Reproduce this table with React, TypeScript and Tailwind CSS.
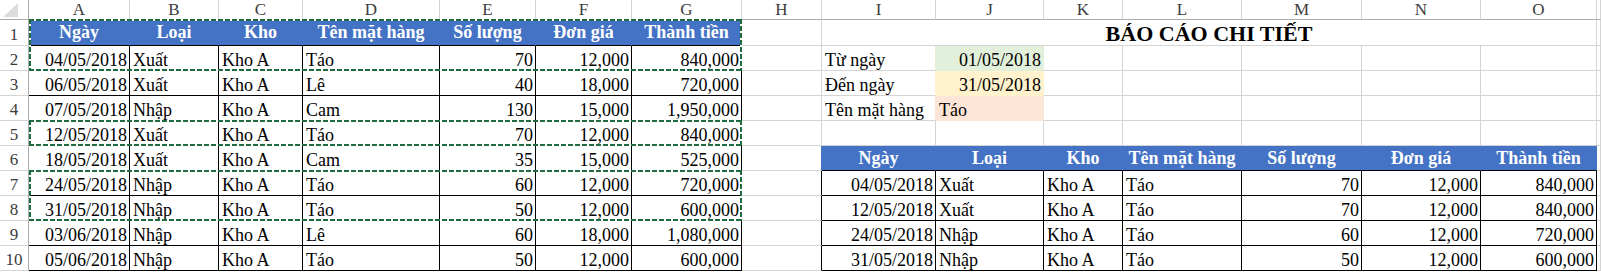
import React from 'react';

type BC = 'grid' | 'black' | 'blue' | 'green' | 'yellow' | 'peach' | 'hdr';
type Fill = 'white' | 'blue' | 'green' | 'yellow' | 'peach';
type Align = 'l' | 'r' | 'c';

const RIGHT: Record<BC, string> = {
  grid: 'border-r-[#d4d4d4]',
  black: 'border-r-black',
  blue: 'border-r-[#4472c4]',
  green: 'border-r-[#e2efda]',
  yellow: 'border-r-[#fff2cc]',
  peach: 'border-r-[#fce4d6]',
  hdr: 'border-r-[#ababab]',
};
const BOTTOM: Record<BC, string> = {
  grid: 'border-b-[#d4d4d4]',
  black: 'border-b-black',
  blue: 'border-b-[#4472c4]',
  green: 'border-b-[#e2efda]',
  yellow: 'border-b-[#fff2cc]',
  peach: 'border-b-[#fce4d6]',
  hdr: 'border-b-[#ababab]',
};
const BG: Record<Fill, string> = {
  white: 'bg-white',
  blue: 'bg-[#4472c4]',
  green: 'bg-[#e2efda]',
  yellow: 'bg-[#fff2cc]',
  peach: 'bg-[#fce4d6]',
};
const ALIGN: Record<Align, string> = {
  l: 'justify-start pl-[3px]',
  r: 'justify-end pr-[2px]',
  c: 'justify-center',
};

type Cell = {
  key: string;
  text?: string;
  align?: Align;
  fill?: Fill;
  right: BC;
  bottom: BC;
  kind: 'body' | 'head' | 'axis' | 'corner' | 'title' | 'colhead';
  span7?: boolean;
};

const letters = ['A', 'B', 'C', 'D', 'E', 'F', 'G', 'H', 'I', 'J', 'K', 'L', 'M', 'N', 'O'];
const headers = ['Ngày', 'Loại', 'Kho', 'Tên mặt hàng', 'Số lượng', 'Đơn giá', 'Thành tiền'];
const dataAligns: Align[] = ['r', 'l', 'l', 'l', 'r', 'r', 'r'];

const table1: string[][] = [
  ['04/05/2018', 'Xuất', 'Kho A', 'Táo', '70', '12,000', '840,000'],
  ['06/05/2018', 'Xuất', 'Kho A', 'Lê', '40', '18,000', '720,000'],
  ['07/05/2018', 'Nhập', 'Kho A', 'Cam', '130', '15,000', '1,950,000'],
  ['12/05/2018', 'Xuất', 'Kho A', 'Táo', '70', '12,000', '840,000'],
  ['18/05/2018', 'Xuất', 'Kho A', 'Cam', '35', '15,000', '525,000'],
  ['24/05/2018', 'Nhập', 'Kho A', 'Táo', '60', '12,000', '720,000'],
  ['31/05/2018', 'Nhập', 'Kho A', 'Táo', '50', '12,000', '600,000'],
  ['03/06/2018', 'Nhập', 'Kho A', 'Lê', '60', '18,000', '1,080,000'],
  ['05/06/2018', 'Nhập', 'Kho A', 'Táo', '50', '12,000', '600,000'],
];

const report: string[][] = [
  ['04/05/2018', 'Xuất', 'Kho A', 'Táo', '70', '12,000', '840,000'],
  ['12/05/2018', 'Xuất', 'Kho A', 'Táo', '70', '12,000', '840,000'],
  ['24/05/2018', 'Nhập', 'Kho A', 'Táo', '60', '12,000', '720,000'],
  ['31/05/2018', 'Nhập', 'Kho A', 'Táo', '50', '12,000', '600,000'],
];

const params: { label: string; value: string; align: Align; fill: Fill; bc: BC }[] = [
  { label: 'Từ ngày', value: '01/05/2018', align: 'r', fill: 'green', bc: 'green' },
  { label: 'Đến ngày', value: '31/05/2018', align: 'r', fill: 'yellow', bc: 'yellow' },
  { label: 'Tên mặt hàng', value: 'Táo', align: 'l', fill: 'peach', bc: 'peach' },
];

function buildCells(): Cell[] {
  const cells: Cell[] = [];
  cells.push({ key: 'corner', kind: 'corner', right: 'hdr', bottom: 'hdr' });
  letters.forEach((l) =>
    cells.push({ key: 'h' + l, kind: 'colhead', text: l, align: 'c', right: 'grid', bottom: 'hdr' })
  );
  cells.push({ key: 'hP', kind: 'colhead', right: 'grid', bottom: 'hdr' });

  for (let r = 1; r <= 10; r++) {
    cells.push({ key: `n${r}`, kind: 'axis', text: String(r), align: 'c', right: 'hdr', bottom: 'grid' });
    for (let c = 0; c < 7; c++) {
      if (r === 1) {
        cells.push({
          key: `a${r}-${c}`,
          kind: 'head',
          text: headers[c],
          align: 'c',
          fill: 'blue',
          right: c === 6 ? 'black' : 'blue',
          bottom: 'black',
        });
      } else {
        cells.push({
          key: `a${r}-${c}`,
          kind: 'body',
          text: table1[r - 2][c],
          align: dataAligns[c],
          right: 'black',
          bottom: 'black',
        });
      }
    }
    cells.push({
      key: `H${r}`,
      kind: 'body',
      right: r === 6 ? 'blue' : r >= 7 ? 'black' : 'grid',
      bottom: 'grid',
    });
    if (r === 1) {
      cells.push({
        key: 'title',
        kind: 'title',
        text: 'BÁO CÁO CHI TIẾT',
        align: 'c',
        right: 'grid',
        bottom: 'grid',
        span7: true,
      });
    } else if (r >= 2 && r <= 4) {
      const p = params[r - 2];
      cells.push({ key: `I${r}`, kind: 'body', text: p.label, align: 'l', right: p.bc, bottom: 'grid' });
      cells.push({ key: `J${r}`, kind: 'body', text: p.value, align: p.align, fill: p.fill, right: p.bc, bottom: p.bc });
      for (let c = 2; c < 7; c++) cells.push({ key: `b${r}-${c}`, kind: 'body', right: 'grid', bottom: 'grid' });
    } else if (r === 5) {
      for (let c = 0; c < 7; c++) cells.push({ key: `b${r}-${c}`, kind: 'body', right: 'grid', bottom: 'grid' });
    } else if (r === 6) {
      for (let c = 0; c < 7; c++)
        cells.push({
          key: `b${r}-${c}`,
          kind: 'head',
          text: headers[c],
          align: 'c',
          fill: 'blue',
          right: 'blue',
          bottom: 'black',
        });
    } else {
      for (let c = 0; c < 7; c++)
        cells.push({
          key: `b${r}-${c}`,
          kind: 'body',
          text: report[r - 7][c],
          align: dataAligns[c],
          right: 'black',
          bottom: 'black',
        });
    }
    cells.push({ key: `P${r}`, kind: 'body', right: 'grid', bottom: 'grid' });
  }
  return cells;
}

const KIND: Record<Cell['kind'], string> = {
  body: 'items-end text-[18px] leading-[20px] text-black',
  head: 'items-center text-[18px] font-bold text-white',
  axis: 'items-end text-[17px] leading-[20px] text-[#3c3c3c]',
  colhead: 'items-center text-[17px] text-[#3c3c3c]',
  corner: 'items-end justify-end',
  title: 'items-end text-[22px] leading-[22px] font-bold text-black',
};

function Marquee({ pos }: { pos: string }) {
  const h = 'bg-[repeating-linear-gradient(90deg,#1d6b3e_0px_5px,#ffffff_5px_7px)]';
  const v = 'bg-[repeating-linear-gradient(180deg,#1d6b3e_0px_5px,#ffffff_5px_7px)]';
  return (
    <div className={`pointer-events-none absolute ${pos}`}>
      <div className={`absolute left-0 right-0 top-0 h-[2px] ${h}`} />
      <div className={`absolute left-0 right-0 bottom-0 h-[2px] ${h}`} />
      <div className={`absolute top-0 bottom-0 left-0 w-[2px] ${v}`} />
      <div className={`absolute top-0 bottom-0 right-0 w-[2px] ${v}`} />
    </div>
  );
}

export default function App() {
  const cells = buildCells();
  return (
    <div className="relative h-[272px] w-[1601px] overflow-hidden bg-white font-['Liberation_Serif','Times_New_Roman',serif]">
      <div className="grid grid-cols-[29px_101px_89px_84px_137px_96px_96px_110px_80px_114px_108px_79px_119px_120px_119px_116px_1fr] grid-rows-[20px_26px_repeat(9,25px)]">
        {cells.map((c) => (
          <div
            key={c.key}
            className={`box-border flex overflow-hidden whitespace-nowrap border-r border-b ${RIGHT[c.right]} ${BOTTOM[c.bottom]} ${
              BG[c.fill ?? 'white']
            } ${KIND[c.kind]} ${ALIGN[c.align ?? 'l']} ${c.span7 ? 'col-span-7' : ''}`}
          >
            {c.kind === 'corner' ? (
              <svg width="16" height="14" viewBox="0 0 16 14" className="mb-[2px] mr-[3px]">
                <polygon points="15,0 15,14 0,14" fill="#dcdcdc" />
              </svg>
            ) : (
              c.text
            )}
          </div>
        ))}
      </div>
      <Marquee pos="left-[29px] top-[19px] w-[713px] h-[52px]" />
      <Marquee pos="left-[29px] top-[120px] w-[713px] h-[26px]" />
      <Marquee pos="left-[29px] top-[170px] w-[713px] h-[51px]" />
    </div>
  );
}
